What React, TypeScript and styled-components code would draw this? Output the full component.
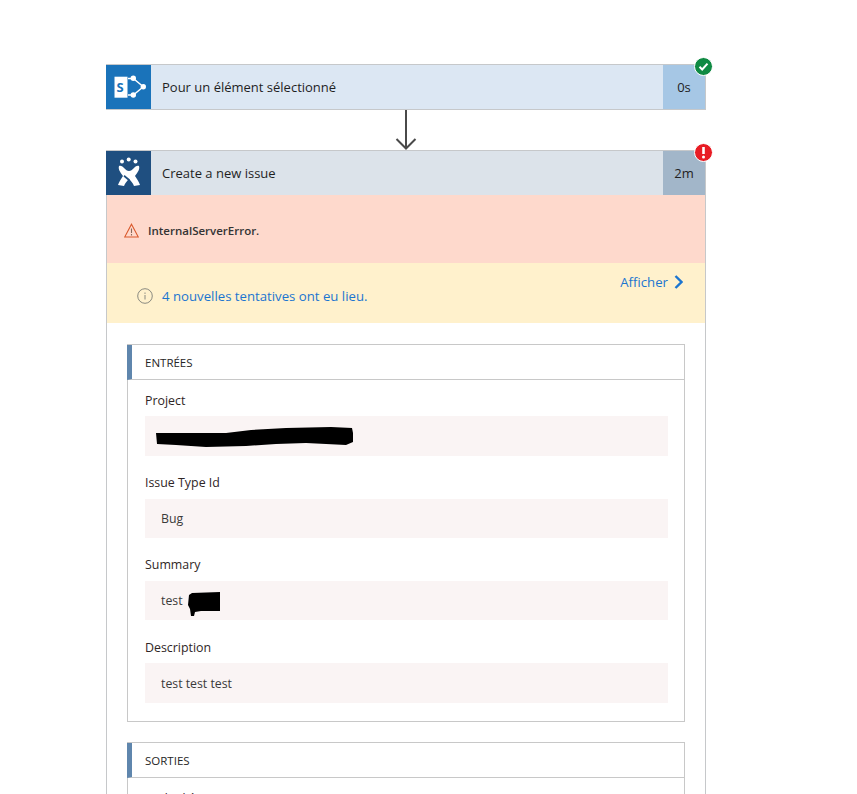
import React from "react";
import styled, { createGlobalStyle } from "styled-components";

const Global = createGlobalStyle`
  html, body { margin: 0; padding: 0; background: #fff; height: 794px; overflow: hidden; }
  body { font-family: "Open Sans", "Noto Sans", sans-serif; color: #2b2b2b; }
`;

const Page = styled.div`
  width: 857px;
  height: 794px;
  overflow: hidden;
  padding: 64px 151px 0 106px;
  box-sizing: border-box;
`;

const Card = styled.div`
  position: relative;
  width: 600px;
`;

const CardHeader = styled.div<{ $bg: string; $open?: boolean }>`
  display: flex;
  height: ${(p) => (p.$open ? 45 : 46)}px;
  box-sizing: border-box;
  border: 1px solid #c6c8ca;
  border-left: 0;
  border-bottom: ${(p) => (p.$open ? "0" : "1px solid #c6c8ca")};
  background: ${(p) => p.$bg};
`;

const HeaderIcon = styled.div<{ $bg: string }>`
  width: 45px;
  display: flex;
  align-items: center;
  justify-content: center;
  background: ${(p) => p.$bg};
`;

const HeaderTitle = styled.div`
  flex: 1;
  padding-left: 11px;
  font-size: 13px;
  line-height: 44px;
  color: #1f1f1f;
`;

const Duration = styled.div<{ $bg: string }>`
  width: 42px;
  text-align: center;
  font-size: 13px;
  line-height: 44px;
  background: ${(p) => p.$bg};
  color: #222;
`;

const Badge = styled.div<{ $bg: string }>`
  position: absolute;
  top: -7px;
  right: -7px;
  width: 17px;
  height: 17px;
  border-radius: 50%;
  background: ${(p) => p.$bg};
  display: flex;
  align-items: center;
  justify-content: center;
  border: 1px solid #fff;
  box-sizing: content-box;
`;

const Connector = styled.div`
  height: 40px;
  display: flex;
  justify-content: center;
  padding-right: 1px;
`;

const CardBody = styled.div`
  border-left: 1px solid #c6c8ca;
  border-right: 1px solid #c6c8ca;
  box-sizing: border-box;
`;

const ErrorBar = styled.div`
  height: 68px;
  box-sizing: border-box;
  padding: 2px 0 0 17px;
  background: #fed9cc;
  display: flex;
  align-items: center;
  gap: 9px;
  font-size: 11.5px;
  font-weight: 600;
  color: #333;
`;

const RetryBar = styled.div`
  height: 60px;
  background: #fff1cc;
  position: relative;
  display: flex;
  align-items: center;
  padding: 6px 0 0 30px;
  gap: 9px;
  box-sizing: border-box;
  font-size: 13.2px;
  color: #1b75d0;
`;

const ShowLink = styled.div`
  position: absolute;
  right: 22px;
  top: 10px;
  display: flex;
  align-items: center;
  gap: 6px;
  font-size: 13.2px;
  color: #1b75d0;
`;

const Content = styled.div`
  padding: 21px 20px 0;
  display: flex;
  flex-direction: column;
  gap: 20px;
`;

const Section = styled.section`
  border: 1px solid #c8c8c8;
`;

const SectionHead = styled.div`
  height: 34px;
  margin: 0 0 0 -1px;
  border-left: 5px solid #5f86ad;
  border-bottom: 1px solid #c8c8c8;
  padding-left: 13px;
  font-size: 11.5px;
  line-height: 36px;
  color: #262626;
`;

const Fields = styled.div`
  padding: 10.6px 16px 18.6px 17px;
  display: flex;
  flex-direction: column;
  gap: 17.2px;
`;

const Field = styled.div`
  display: flex;
  flex-direction: column;
  gap: 5.8px;
`;

const Label = styled.div`
  font-size: 12.4px;
  font-weight: 500;
  line-height: 20px;
  color: #2f2626;
`;

const Value = styled.div`
  height: 39.33px;
  box-sizing: border-box;
  background: #faf4f4;
  padding: 0.6px 0 0 16px;
  display: flex;
  align-items: center;
  gap: 4px;
  font-size: 12.3px;
  color: #3a3a3a;
`;

const Scribble = styled.svg<{ $shift?: number }>`
  display: block;
  flex: none;
  margin-left: ${(p) => p.$shift ?? 0}px;
`;

export default function App() {
  return (
    <Page>
      <Global />
      <Card>
        <CardHeader $bg="#dce7f3">
          <HeaderIcon $bg="#1a73ba">
            <svg width="45" height="44" viewBox="0 1 45 44">
              <path d="M8.500 12.700h13v21h-13z" fill="#fff" />
              <text x="10.500" y="28" fontSize="13" fontWeight="700" fill="#1a73ba" fontFamily="Open Sans">S</text>
              <path d="M22 14.500h5.300l10 8.200-10 8.300H22" fill="none" stroke="#fff" strokeWidth="1.400" />
              <circle cx="27.300" cy="14.300" r="2.700" fill="#fff" />
              <circle cx="37.300" cy="22.700" r="2.700" fill="#fff" />
              <circle cx="27.300" cy="31" r="2.700" fill="#fff" />
            </svg>
          </HeaderIcon>
          <HeaderTitle>Pour un élément sélectionné</HeaderTitle>
          <Duration $bg="#a6c7e5">0s</Duration>
        </CardHeader>
        <Badge $bg="#0f8a43">
          <svg width="11" height="11" viewBox="0 0 11 11">
            <path d="M1.500 5.800l2.700 2.700 5.300-5.800" fill="none" stroke="#fff" strokeWidth="2" />
          </svg>
        </Badge>
      </Card>
      <Connector>
        <svg width="22" height="40" viewBox="0 0 22 40">
          <path d="M11 0v38.500M1.500 29l9.500 9.500 9.500-9.500" fill="none" stroke="#4a4a4a" strokeWidth="2" />
        </svg>
      </Connector>
      <Card>
        <CardHeader $bg="#dce3ea" $open>
          <HeaderIcon $bg="#1f4f80">
            <svg width="45" height="44" viewBox="0 1 45 44">
              <circle cx="22.700" cy="9.500" r="2" fill="#fff" />
              <circle cx="16" cy="11.500" r="2" fill="#fff" />
              <circle cx="29.500" cy="11.500" r="2" fill="#fff" />
              <path d="M13 16c2-1 4 1 5 2 2 2 3 3 5 3s3-1 5-3c1-1 3-3 5-2 1 3-1 6-4 10 2 3 4 6 5 9l-6 1c-1-3-3-5-5-7-2 2-4 4-5 7l-6-1c1-3 3-6 5-9-3-4-5-7-4-10z" fill="#fff" />
              <path d="M18.500 25l5.500 4.500-1.500 1.200-5-4.200z" fill="#1f4f80" />
            </svg>
          </HeaderIcon>
          <HeaderTitle>Create a new issue</HeaderTitle>
          <Duration $bg="#a2b6c9">2m</Duration>
        </CardHeader>
        <Badge $bg="#e81c24">
          <svg width="11" height="13" viewBox="0 0 11 13">
            <path d="M5.500 1v7" stroke="#fff" strokeWidth="2.600" />
            <circle cx="5.500" cy="11" r="1.500" fill="#fff" />
          </svg>
        </Badge>
        <CardBody>
          <ErrorBar>
            <svg width="15" height="15" viewBox="0 0 15 15">
              <path d="M7.500 1.200L14.300 14H.7z" fill="none" stroke="#d9582a" strokeWidth="1.100" />
              <path d="M7.500 5.500v4.500M7.500 11v1.500" stroke="#8a6a5a" strokeWidth="1.100" />
            </svg>
            <span>InternalServerError.</span>
          </ErrorBar>
          <RetryBar>
            <svg width="16" height="16" viewBox="0 0 16 16">
              <circle cx="8" cy="8" r="7.300" fill="none" stroke="#8a8a80" strokeWidth="1" />
              <path d="M8 7v4.500M8 4.500v1.400" stroke="#8a8a80" strokeWidth="1" />
            </svg>
            <span>4 nouvelles tentatives ont eu lieu.</span>
            <ShowLink>
              Afficher
              <svg width="9" height="14" viewBox="0 0 9 14">
                <path d="M1.500 1l6 6-6 6" fill="none" stroke="#1b75d0" strokeWidth="2.400" />
              </svg>
            </ShowLink>
          </RetryBar>
          <Content>
            <Section>
              <SectionHead>ENTRÉES</SectionHead>
              <Fields>
                <Field>
                  <Label>Project</Label>
                  <Value>
                    <Scribble $shift={-5} width="198" height="22" viewBox="0 0 198 22">
                      <path d="M0 8L30 8L70 8L95 5L130 3L175 2L196 3L197 8L197 17L190 20L150 18L120 19L90 21L50 22L20 20L1 19z" fill="#000" />
                    </Scribble>
                  </Value>
                </Field>
                <Field>
                  <Label>Issue Type Id</Label>
                  <Value>Bug</Value>
                </Field>
                <Field>
                  <Label>Summary</Label>
                  <Value>
                    test
                    <Scribble width="34" height="30" viewBox="0 0 34 30">
                      <path d="M2 9l3-2 28-1v19H14l-6 1-1 4-3 0-1-7-2-4z" fill="#000" />
                    </Scribble>
                  </Value>
                </Field>
                <Field>
                  <Label>Description</Label>
                  <Value>test test test</Value>
                </Field>
              </Fields>
            </Section>
            <Section>
              <SectionHead>SORTIES</SectionHead>
              <Fields>
                <Field>
                  <Label>Code d'état</Label>
                </Field>
              </Fields>
            </Section>
          </Content>
        </CardBody>
      </Card>
    </Page>
  );
}
